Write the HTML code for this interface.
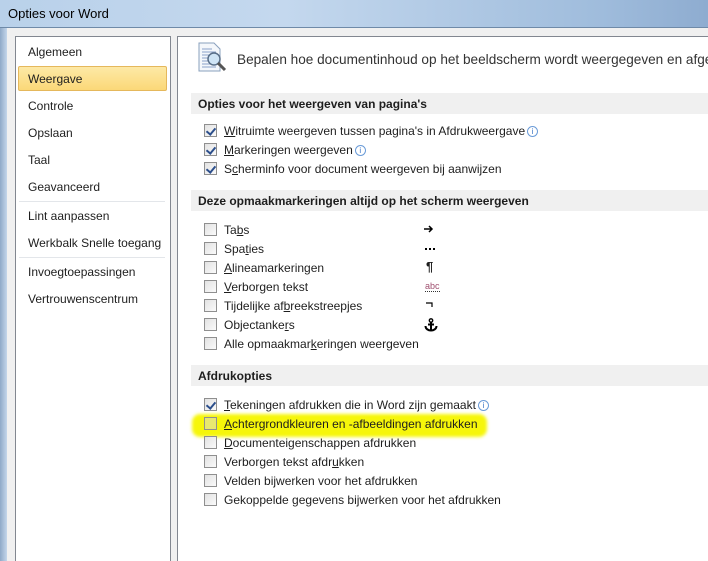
<!DOCTYPE html><html><head><style>
*{margin:0;padding:0;box-sizing:border-box}
body{width:708px;height:561px;overflow:hidden;background:#f0f0f0;font-family:"Liberation Sans",sans-serif;font-size:12px;color:#1e1e1e;position:relative}
.a{position:absolute;white-space:nowrap}
#title{left:0;top:0;width:708px;height:28px;background:linear-gradient(90deg,#b9d1ea,#c4d8ee 40%,#9fbcdc 85%,#8eacd0);border-bottom:1px solid #6f8aa8}
#frame{left:0;top:28px;width:7px;height:533px;background:linear-gradient(90deg,#8fa9c8,#c4d6ea)}
#lp{left:15px;top:36px;width:156px;height:525px;background:#fff;border:1px solid #828790;border-bottom:none}
#rp{left:177px;top:36px;width:531px;height:525px;background:#fff;border:1px solid #828790;border-right:none;border-bottom:none;overflow:hidden}
.nav{left:28px}
.sep{height:1px;background:#e3e6ea;left:19px;width:146px}
.hd{left:191px;width:517px;height:21px;background:#f0f0f0;font-weight:bold;padding:4px 0 0 7px;color:#1e1e1e}
.cb{width:13px;height:13px;border:1px solid #8f8f8f;background:linear-gradient(135deg,#e2e2e2,#fafafa);left:204px}
.cb.c::after{content:"";position:absolute;left:3px;top:1px;width:4px;height:7px;border:solid #2c4f8c;border-width:0 2px 2px 0;transform:rotate(40deg)}
.lb{left:224px}
.i{display:inline-block;width:11px;height:11px;border:1px solid #6a9bd8;border-radius:50%;font-size:8px;line-height:9px;text-align:center;color:#3a74c4;vertical-align:1px;margin-left:2px}
.sym{left:425px}
</style></head><body>
<div class="a" id="title"></div>
<div class="a" style="left:8px;top:6px;font-size:13px;color:#000">Opties voor Word</div>
<div class="a" id="frame"></div>
<div class="a" id="lp"></div>
<div class="a" id="rp"><div class="a" style="left:59px;top:15px;font-size:13.6px;color:#333">Bepalen hoe documentinhoud op het beeldscherm wordt weergegeven en afgedrukt.</div></div>
<div class="a" style="left:18px;top:66px;width:149px;height:25px;background:linear-gradient(#fde9a6,#fbd878);border:1px solid #e5b85c;border-radius:2px"></div>
<div class="a nav" style="top:45px">Algemeen</div>
<div class="a nav" style="top:72px">Weergave</div>
<div class="a nav" style="top:99px">Controle</div>
<div class="a nav" style="top:126px">Opslaan</div>
<div class="a nav" style="top:153px">Taal</div>
<div class="a nav" style="top:180px">Geavanceerd</div>
<div class="a sep" style="top:201px"></div>
<div class="a nav" style="top:209px">Lint aanpassen</div>
<div class="a nav" style="top:236px">Werkbalk Snelle toegang</div>
<div class="a sep" style="top:257px"></div>
<div class="a nav" style="top:265px">Invoegtoepassingen</div>
<div class="a nav" style="top:292px">Vertrouwenscentrum</div>

<svg class="a" style="left:198px;top:42px" width="30" height="32" viewBox="0 0 30 32">
<path d="M1 1h15l6 6v22H1z" fill="#f4f7fb" stroke="#8aa0bd"/>
<path d="M4 7h10M4 10h14M4 13h14M4 16h8M4 19h7M4 22h8M4 25h14" stroke="#8aa0c8"/>
<circle cx="16" cy="17" r="6" fill="#cfe4f5" stroke="#5a6f88" stroke-width="1.5"/>
<path d="M20 21l7 7" stroke="#555" stroke-width="3"/>
</svg>

<div class="a hd" style="top:93px">Opties voor het weergeven van pagina's</div>
<div class="a cb c" style="top:124px"></div><div class="a lb" style="top:124px"><u>W</u>itruimte weergeven tussen pagina's in Afdrukweergave<span class="i">i</span></div>
<div class="a cb c" style="top:143px"></div><div class="a lb" style="top:143px"><u>M</u>arkeringen weergeven<span class="i">i</span></div>
<div class="a cb c" style="top:162px"></div><div class="a lb" style="top:162px">S<u>c</u>herminfo voor document weergeven bij aanwijzen</div>

<div class="a hd" style="top:190px">Deze opmaakmarkeringen altijd op het scherm weergeven</div>
<div class="a cb" style="top:223px"></div><div class="a lb" style="top:223px">Ta<u>b</u>s</div>
<svg class="a" style="left:424px;top:225px" width="10" height="8"><path d="M0 4h8M5 1l3 3-3 3" stroke="#000" stroke-width="1.5" fill="none"/></svg>
<div class="a cb" style="top:242px"></div><div class="a lb" style="top:242px">Spa<u>t</u>ies</div>
<svg class="a" style="left:425px;top:248px" width="10" height="3"><path d="M0 0h2v2H0zM4 0h2v2H4zM8 0h2v2H8z" fill="#000"/></svg>
<div class="a cb" style="top:261px"></div><div class="a lb" style="top:261px"><u>A</u>lineamarkeringen</div><div class="a sym" style="top:259px;left:426px;font-weight:bold;font-size:13px">¶</div>
<div class="a cb" style="top:280px"></div><div class="a lb" style="top:280px"><u>V</u>erborgen tekst</div><div class="a sym" style="top:281px;font-size:9px;color:#a05070;border-bottom:1px dotted #333">abc</div>
<div class="a cb" style="top:299px"></div><div class="a lb" style="top:299px">Tijdelijke af<u>b</u>reekstreepjes</div>
<svg class="a" style="left:426px;top:302px" width="8" height="6"><path d="M0 1h6v4" stroke="#000" stroke-width="1.2" fill="none"/></svg>
<div class="a cb" style="top:318px"></div><div class="a lb" style="top:318px">Objectanke<u>r</u>s</div>
<svg class="a" style="left:424px;top:318px" width="14" height="14" viewBox="0 0 14 14"><circle cx="7" cy="2.5" r="1.7" fill="none" stroke="#000" stroke-width="1.4"/><path d="M7 4v9M4 6.5h6M1.5 8c0 3 3 4.5 5.5 4.5S12.5 11 12.5 8" stroke="#000" stroke-width="2" fill="none"/></svg>
<div class="a cb" style="top:337px"></div><div class="a lb" style="top:337px">Alle opmaakmar<u>k</u>eringen weergeven</div>

<div class="a hd" style="top:365px">Afdrukopties</div>
<div class="a" style="left:192px;top:414px;width:295px;height:23px;background:#f6f60a;border-radius:8px;filter:blur(1.5px)"></div>
<div class="a cb c" style="top:398px"></div><div class="a lb" style="top:398px"><u>T</u>ekeningen afdrukken die in Word zijn gemaakt<span class="i">i</span></div>
<div class="a cb" style="top:417px;background:#e8e870"></div><div class="a lb" style="top:417px"><u>A</u>chtergrondkleuren en -afbeeldingen afdrukken</div>
<div class="a cb" style="top:436px"></div><div class="a lb" style="top:436px"><u>D</u>ocumenteigenschappen afdrukken</div>
<div class="a cb" style="top:455px"></div><div class="a lb" style="top:455px">Verborgen tekst afdr<u>u</u>kken</div>
<div class="a cb" style="top:474px"></div><div class="a lb" style="top:474px">Velden bijwerken voor het afdrukken</div>
<div class="a cb" style="top:493px"></div><div class="a lb" style="top:493px">Gekoppelde gegevens bijwerken voor het afdrukken</div>
</body></html>
